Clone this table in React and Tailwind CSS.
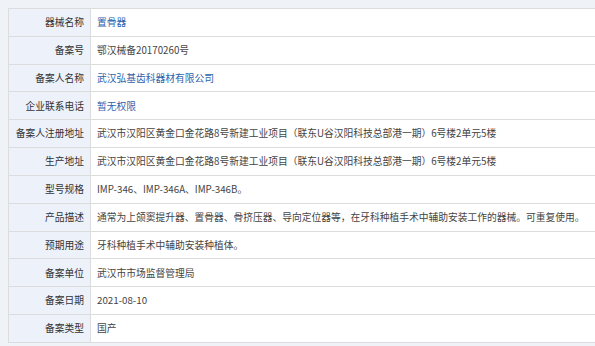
import React from "react";

const rows = [
  ["器械名称", "置骨器", true],
  ["备案号", "鄂汉械备20170260号", false],
  ["备案人名称", "武汉弘基齿科器材有限公司", true],
  ["企业联系电话", "暂无权限", true],
  ["备案人注册地址", "武汉市汉阳区黄金口金花路8号新建工业项目（联东U谷汉阳科技总部港一期）6号楼2单元5楼", false],
  ["生产地址", "武汉市汉阳区黄金口金花路8号新建工业项目（联东U谷汉阳科技总部港一期）6号楼2单元5楼", false],
  ["型号规格", "IMP-346、IMP-346A、IMP-346B。", false],
  ["产品描述", "通常为上颌窦提升器、置骨器、骨挤压器、导向定位器等，在牙科种植手术中辅助安装工作的器械。可重复使用。", false],
  ["预期用途", "牙科种植手术中辅助安装种植体。", false],
  ["备案单位", "武汉市市场监督管理局", false],
  ["备案日期", "2021-08-10", false],
  ["备案类型", "国产", false],
];

export default function App() {
  return (
    <div
      className="w-[595px] h-[346px] overflow-hidden bg-[#eff3f7] pl-2 pt-2"
      style={{ fontFamily: '"Microsoft YaHei", "Noto Sans CJK SC", "Noto Sans", sans-serif' }}
    >
      <div className="w-[620px] border-t border-l border-[#dcdcdc] bg-white">
        {rows.map(([label, value, link], i) => (
          <div key={i} className="flex h-[27.83px] border-b border-[#dcdcdc]">
            <div className="w-[82px] shrink-0 flex items-center justify-end pr-[6px] bg-[#edf1fa] border-r border-[#dcdcdc] text-[9.75px] text-[#333] whitespace-nowrap">
              {label}
            </div>
            <div
              className={
                "flex items-center pl-[6px] text-[9.75px] whitespace-nowrap " +
                (link ? "text-[#2d62ae]" : "text-[#444]")
              }
            >
              {value}
            </div>
          </div>
        ))}
      </div>
    </div>
  );
}
